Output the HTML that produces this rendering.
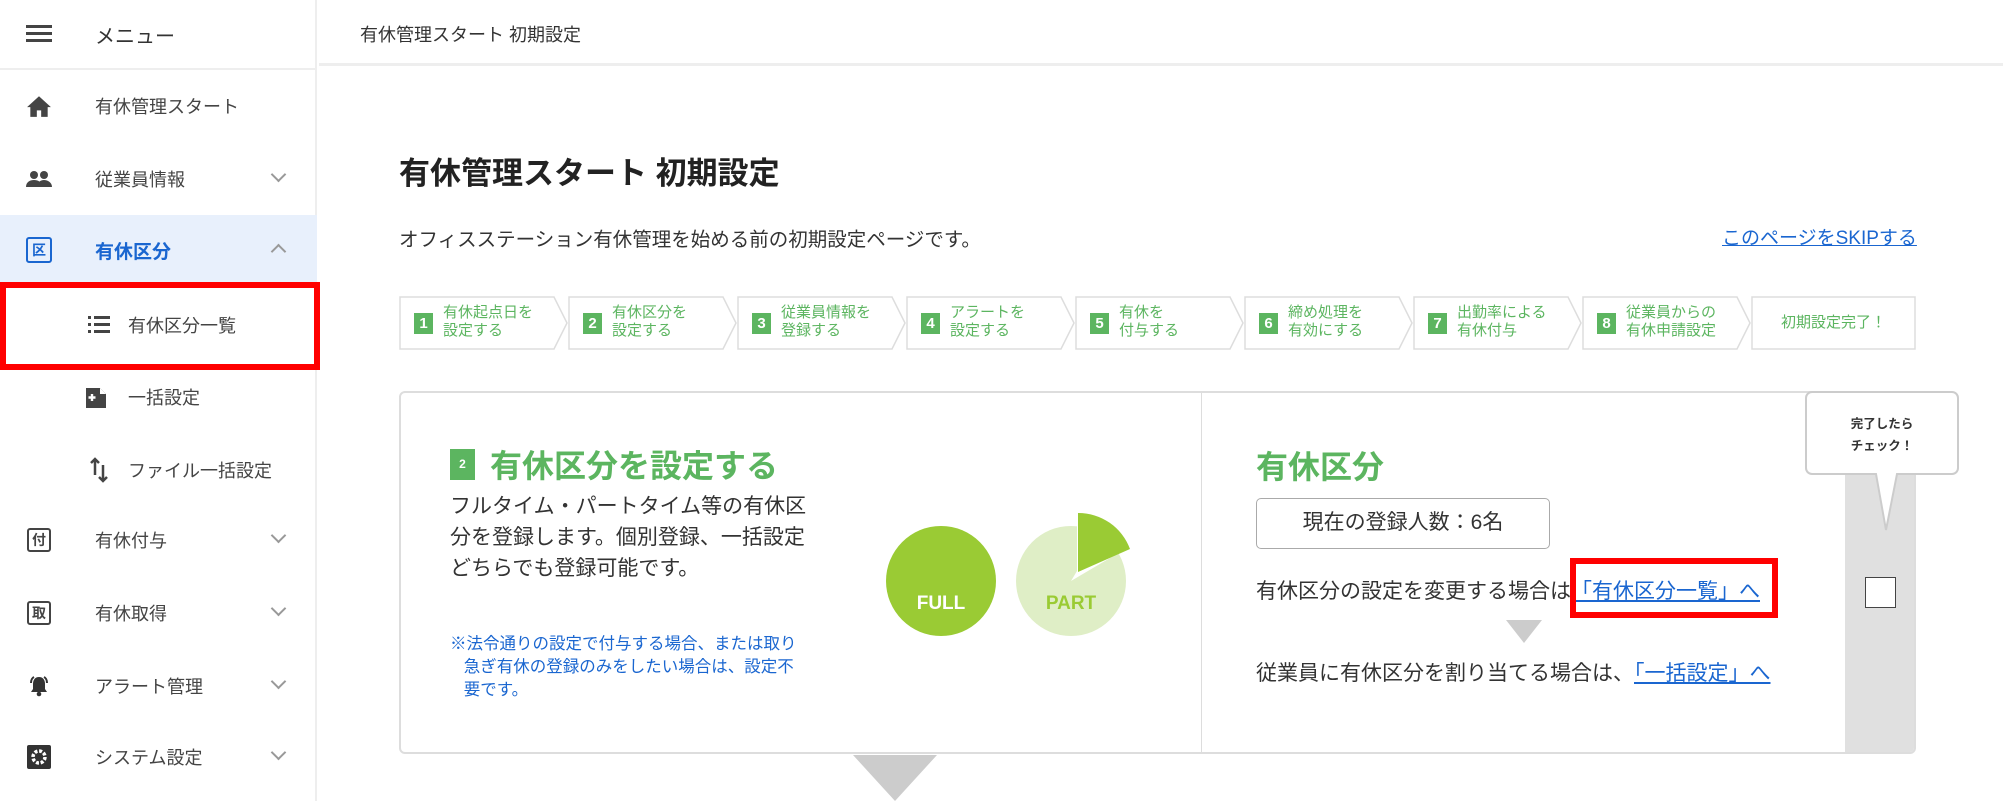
<!DOCTYPE html>
<html><head><meta charset="utf-8"><style>
*{margin:0;padding:0;box-sizing:border-box}
body{width:2003px;height:801px;overflow:hidden;background:#fff;font-family:"Liberation Sans","Noto Sans CJK JP",sans-serif;color:#333;position:relative}
.a{position:absolute;white-space:nowrap}
.side{position:absolute;left:0;top:0;width:317px;height:801px;border-right:2px solid #eee}
.it{position:absolute;left:0;width:317px;height:40px;font-size:18px;color:#444;display:flex;align-items:center}
.it .lb{position:absolute;left:95px}
.it .ic{position:absolute;left:26px;width:26px;height:26px;display:flex;align-items:center;justify-content:center}
.chev{position:absolute;left:273px;width:11px;height:11px;border-right:2px solid #999;border-bottom:2px solid #999;transform:rotate(45deg);top:10px}
.kbox{width:24px;height:24px;border:2px solid #444;border-radius:3px;font-size:14px;display:flex;align-items:center;justify-content:center;color:#444;font-weight:bold}
.step{position:absolute;top:296px;height:54px}
.step svg{position:absolute;left:0;top:0}
.num{position:absolute;left:15px;top:17px;width:19px;height:21px;background:#5cb560;color:#fff;font-size:15px;font-weight:bold;text-align:center;line-height:21px}
.st{position:absolute;left:44px;top:8px;font-size:15px;line-height:18px;color:#5cb560;white-space:nowrap}
</style></head><body>
<div class="side">
 <div class="a" style="left:26px;top:25px;width:26px;height:3px;background:#444"></div>
 <div class="a" style="left:26px;top:32px;width:26px;height:3px;background:#444"></div>
 <div class="a" style="left:26px;top:39px;width:26px;height:3px;background:#444"></div>
 <div class="a" style="left:95px;top:20px;font-size:20px;color:#333">メニュー</div>
 <div class="a" style="left:0;top:68px;width:317px;height:2px;background:#eee"></div>
 <div class="it" style="top:86px"><div class="ic"><svg width="26" height="24" viewBox="0 0 24 22"><path d="M12 2L1 12h3v9h6v-6h4v6h6v-9h3z" fill="#444"/></svg></div><span class="lb">有休管理スタート</span></div>
 <div class="it" style="top:159px"><div class="ic"><svg width="26" height="20" viewBox="0 0 26 20"><circle cx="8" cy="6" r="4" fill="#444"/><circle cx="18" cy="6" r="4" fill="#444"/><path d="M0 18c0-5 4-7 8-7s8 2 8 7zM11 18c0-5 4-7 7-7s8 2 8 7z" fill="#444"/></svg></div><span class="lb">従業員情報</span><div class="chev" style="top:10px"></div></div>
 <div class="a" style="left:0;top:215px;width:317px;height:71px;background:#e8f0fc"></div>
 <div class="it" style="top:230px"><div class="ic"><div class="kbox" style="border-color:#1a66d0;color:#1a66d0;width:26px;height:26px">区</div></div><span class="lb" style="color:#1a66d0;font-weight:bold;font-size:19px">有休区分</span><div class="chev" style="transform:rotate(225deg);top:16px"></div></div>
 <div class="a" style="left:0;top:282px;width:320px;height:88px;border:6px solid #f00"></div>
 <div class="it" style="top:305px"><div class="ic" style="left:86px"><svg width="22" height="20" viewBox="0 0 22 20"><rect x="0" y="1" width="3" height="3" fill="#444"/><rect x="6" y="1" width="16" height="3" fill="#444"/><rect x="0" y="8" width="3" height="3" fill="#444"/><rect x="6" y="8" width="16" height="3" fill="#444"/><rect x="0" y="15" width="3" height="3" fill="#444"/><rect x="6" y="15" width="16" height="3" fill="#444"/></svg></div><span class="lb" style="left:128px">有休区分一覧</span></div>
 <div class="it" style="top:377px"><div class="ic" style="left:86px"><svg width="26" height="22" viewBox="0 0 26 22"><path d="M0 2h14l6 6v14H0z" fill="#444"/><path d="M14 2v6h6" fill="#fff"/><path d="M6 8v7M2.5 11.5h7" stroke="#fff" stroke-width="2.4"/></svg></div><span class="lb" style="left:128px">一括設定</span></div>
 <div class="it" style="top:450px"><div class="ic" style="left:86px"><svg width="22" height="28" viewBox="0 0 22 28"><path d="M7 3v16M3 7l4-4 4 4M15 9v16M11 21l4 4 4-4" stroke="#444" stroke-width="2.5" fill="none"/></svg></div><span class="lb" style="left:128px">ファイル一括設定</span></div>
 <div class="it" style="top:520px"><div class="ic"><div class="kbox">付</div></div><span class="lb">有休付与</span><div class="chev"></div></div>
 <div class="it" style="top:593px"><div class="ic"><div class="kbox">取</div></div><span class="lb">有休取得</span><div class="chev"></div></div>
 <div class="it" style="top:666px"><div class="ic"><svg width="24" height="24" viewBox="0 0 24 24"><path d="M12 3c-4 0-6 3-6 7v5l-2 3h16l-2-3v-5c0-4-2-7-6-7z" fill="#333"/><circle cx="12" cy="20" r="2.3" fill="#333"/><path d="M4 9c0-3 1-5 3-6M20 9c0-3-1-5-3-6" stroke="#333" stroke-width="2" fill="none"/></svg></div><span class="lb">アラート管理</span><div class="chev"></div></div>
 <div class="it" style="top:737px"><div class="ic"><svg width="26" height="26" viewBox="0 0 26 26"><rect x="1" y="1" width="24" height="24" rx="2" fill="#333"/><circle cx="13" cy="13" r="6" fill="none" stroke="#fff" stroke-width="3.5" stroke-dasharray="3 1.7"/><circle cx="13" cy="13" r="2" fill="#333"/></svg></div><span class="lb">システム設定</span><div class="chev"></div></div>
</div>

<div class="a" style="left:319px;top:0;width:1684px;height:66px;border-bottom:3px solid #eee"></div>
<div class="a" style="left:360px;top:21px;font-size:18px;color:#333">有休管理スタート 初期設定</div>
<div class="a" style="left:399px;top:148px;font-size:31px;font-weight:bold;color:#222">有休管理スタート 初期設定</div>
<div class="a" style="left:399px;top:223px;font-size:19.5px;color:#333">オフィスステーション有休管理を始める前の初期設定ページです。</div>
<div class="a" style="left:1722px;top:223px;font-size:19px;color:#1a66d0;text-decoration:underline">このページをSKIPする</div>

<div class="step" style="left:399px;width:170px"><svg width="170" height="54"><polygon points="1,1 155,1 168,27 155,53 1,53" fill="#fff" stroke="#ddd" stroke-width="1.5"/></svg><div class="num">1</div><div class="st">有休起点日を<br>設定する</div></div>
<div class="step" style="left:568px;width:170px"><svg width="170" height="54"><polygon points="1,1 155,1 168,27 155,53 1,53" fill="#fff" stroke="#ddd" stroke-width="1.5"/></svg><div class="num">2</div><div class="st">有休区分を<br>設定する</div></div>
<div class="step" style="left:737px;width:170px"><svg width="170" height="54"><polygon points="1,1 155,1 168,27 155,53 1,53" fill="#fff" stroke="#ddd" stroke-width="1.5"/></svg><div class="num">3</div><div class="st">従業員情報を<br>登録する</div></div>
<div class="step" style="left:906px;width:170px"><svg width="170" height="54"><polygon points="1,1 155,1 168,27 155,53 1,53" fill="#fff" stroke="#ddd" stroke-width="1.5"/></svg><div class="num">4</div><div class="st">アラートを<br>設定する</div></div>
<div class="step" style="left:1075px;width:170px"><svg width="170" height="54"><polygon points="1,1 155,1 168,27 155,53 1,53" fill="#fff" stroke="#ddd" stroke-width="1.5"/></svg><div class="num">5</div><div class="st">有休を<br>付与する</div></div>
<div class="step" style="left:1244px;width:170px"><svg width="170" height="54"><polygon points="1,1 155,1 168,27 155,53 1,53" fill="#fff" stroke="#ddd" stroke-width="1.5"/></svg><div class="num">6</div><div class="st">締め処理を<br>有効にする</div></div>
<div class="step" style="left:1413px;width:170px"><svg width="170" height="54"><polygon points="1,1 155,1 168,27 155,53 1,53" fill="#fff" stroke="#ddd" stroke-width="1.5"/></svg><div class="num">7</div><div class="st">出勤率による<br>有休付与</div></div>
<div class="step" style="left:1582px;width:170px"><svg width="170" height="54"><polygon points="1,1 155,1 168,27 155,53 1,53" fill="#fff" stroke="#ddd" stroke-width="1.5"/></svg><div class="num">8</div><div class="st">従業員からの<br>有休申請設定</div></div>
<div class="step" style="left:1751px;width:165px"><svg width="165" height="54"><rect x="1" y="1" width="163" height="52" fill="#fff" stroke="#ddd" stroke-width="1.5"/></svg><div class="st" style="left:0;width:165px;text-align:center;top:18px">初期設定完了！</div></div>

<div class="a" style="left:399px;top:391px;width:1517px;height:363px;border:2px solid #ddd;border-radius:6px;overflow:hidden">
 <div class="a" style="left:800px;top:0;width:1px;height:363px;background:#ddd"></div>
 <div class="a" style="left:1444px;top:0;width:73px;height:363px;background:#e0e0e0"></div>
</div>
<div class="a" style="left:450px;top:449px;width:25px;height:31px;background:#5cb560;color:#fff;font-size:12px;font-weight:bold;text-align:center;line-height:31px">2</div>
<div class="a" style="left:490px;top:441px;font-size:32px;font-weight:bold;color:#5cb560">有休区分を設定する</div>
<div class="a" style="left:450px;top:491px;font-size:21px;line-height:31px;color:#333">フルタイム・パートタイム等の有休区<br>分を登録します。個別登録、一括設定<br>どちらでも登録可能です。</div>
<div class="a" style="left:450px;top:633px;font-size:16.5px;line-height:23px;color:#1a66d0">※法令通りの設定で付与する場合、または取り<br>&nbsp;&nbsp;&nbsp;急ぎ有休の登録のみをしたい場合は、設定不<br>&nbsp;&nbsp;&nbsp;要です。</div>
<svg class="a" style="left:880px;top:505px" width="260" height="150" viewBox="0 0 260 150">
 <circle cx="61" cy="76" r="55" fill="#9acb34"/>
 <text x="61" y="104" font-size="19" font-weight="bold" fill="#fff" text-anchor="middle" font-family="Liberation Sans">FULL</text>
 <circle cx="191" cy="76" r="55" fill="#dfeec6"/>
 <path d="M191 76 L197 66 L197 8 A55 55 0 0 1 252 40 Z" fill="#fff"/>
 <path d="M198 67 V8 A55 55 0 0 1 250 44 Z" fill="#9acb34"/>
 <text x="191" y="104" font-size="19" font-weight="bold" fill="#9acb34" text-anchor="middle" font-family="Liberation Sans">PART</text>
</svg>
<div class="a" style="left:1256px;top:442px;font-size:32px;font-weight:bold;color:#5cb560">有休区分</div>
<div class="a" style="left:1256px;top:498px;width:294px;height:51px;border:1.5px solid #aaa;border-radius:5px;font-size:21px;text-align:center;line-height:48px;color:#333">現在の登録人数：6名</div>
<div class="a" style="left:1256px;top:575px;font-size:21px;color:#333">有休区分の設定を変更する場合は<span style="color:#1a66d0;text-decoration:underline">「有休区分一覧」へ</span></div>
<div class="a" style="left:1570px;top:558px;width:208px;height:60px;border:6px solid #f00"></div>
<div class="a" style="left:1506px;top:620px;width:0;height:0;border-left:18px solid transparent;border-right:18px solid transparent;border-top:23px solid #ccc"></div>
<div class="a" style="left:1256px;top:657px;font-size:21px;color:#333">従業員に有休区分を割り当てる場合は、<span style="color:#1a66d0;text-decoration:underline">「一括設定」へ</span></div>
<div class="a" style="left:1865px;top:577px;width:31px;height:31px;background:#fff;border:1.5px solid #444"></div>
<svg class="a" style="left:1804px;top:390px" width="156" height="142"><path d="M8 2 H148 A6 6 0 0 1 154 8 V78 A6 6 0 0 1 148 84 H93 L82 140 L72 84 H8 A6 6 0 0 1 2 78 V8 A6 6 0 0 1 8 2Z" fill="#fff" stroke="#ccc" stroke-width="2"/></svg>
<div class="a" style="left:1806px;top:413px;width:152px;text-align:center;font-size:12.5px;font-weight:bold;line-height:22px;color:#333">完了したら<br>チェック！</div>
<div class="a" style="left:853px;top:755px;width:0;height:0;border-left:42px solid transparent;border-right:42px solid transparent;border-top:46px solid #ccc"></div>
</body></html>
